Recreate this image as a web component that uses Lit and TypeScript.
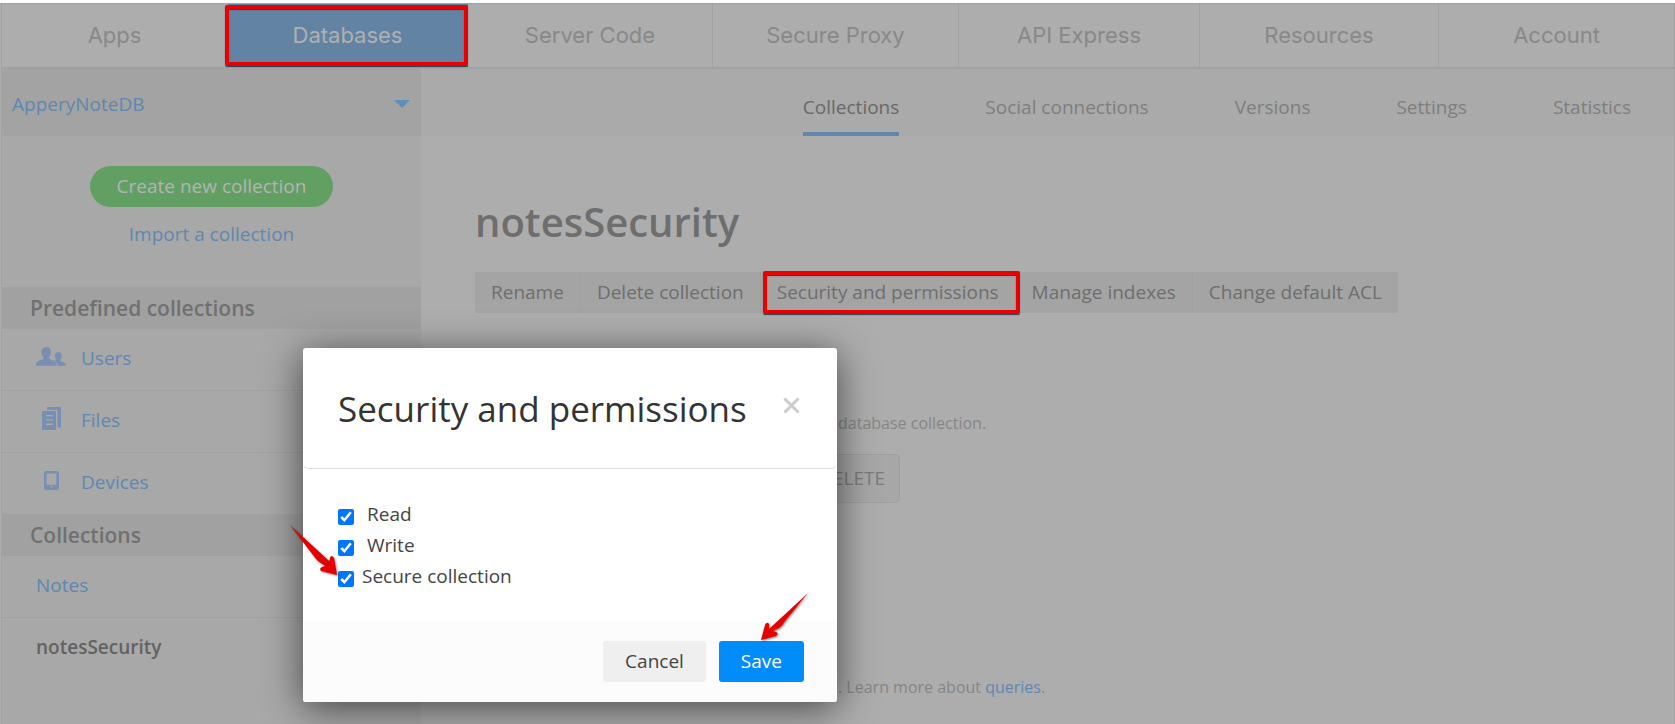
import { LitElement, html, css, svg } from "lit";
import { customElement, state } from "lit/decorators.js";
import { classMap } from "lit/directives/class-map.js";

const NAV = ["Apps", "Databases", "Server Code", "Secure Proxy", "API Express", "Resources", "Account"];
const TABS = ["Collections", "Social connections", "Versions", "Settings", "Statistics"];
const ACTIONS = ["Rename", "Delete collection", "Security and permissions", "Manage indexes", "Change default ACL"];

const usersIcon = svg`
  <svg class="icon" width="31" height="20" viewBox="0 0 31 20" aria-hidden="true">
    <path d="M11 0c3 0 4.600 2 4.400 5.200-.1 2.200-.8 4-1.900 5v1.700c1.200 1 6 2 7 3.600.5.900.6 2.200.6 3.500H0c0-1.300.1-2.600.7-3.500 1-1.600 5.600-2.600 6.900-3.600v-1.700c-1.100-1-1.900-2.800-2-5C5.500 2 8 0 11 0z"/>
    <path d="M23 5c2.400 0 3.800 1.500 3.600 4-.1 1.600-.7 2.900-1.600 3.700v1.200c1 .9 4.500 1.600 5.300 2.800.4.700.5 1.500.5 2.300h-8.600c0-2-.5-3.800-2-4.700l-1.500-.8c.7-.2 1.700-.6 1.900-.9v-.800c-.700-.700-1.200-1.800-1.200-3C19.400 6.500 20.800 5 23 5z"/>
  </svg>`;
const filesIcon = svg`
  <svg class="icon" width="19" height="23" viewBox="0 0 19 23" aria-hidden="true">
    <path d="M5 0h14v20.500h-3.500V2.700H5z"/>
    <path fill-rule="evenodd" d="M0 4h14v19H0zM4 8v1.300h7V8zM4 12.300v1.300h7v-1.300zM4 16.600v1.300h7v-1.300z"/>
  </svg>`;
const deviceIcon = svg`
  <svg class="icon" width="15" height="19" viewBox="0 0 15 19" aria-hidden="true">
    <path fill-rule="evenodd" d="M2 0h11a2 2 0 0 1 2 2v15a2 2 0 0 1-2 2H2a2 2 0 0 1-2-2V2a2 2 0 0 1 2-2zM2.600 2.500v11.300h9.800V2.500zM6.300 15.300l1.200 2 1.200-2z"/>
  </svg>`;

@customElement("permissions-dialog")
export class PermissionsDialog extends LitElement {
  static styles = css`
    :host { display: block; width: 534px; font-family: "Open Sans", sans-serif; color: #333; }
    .dialog {
      background: #fff; border-radius: 3px; overflow: hidden;
      box-shadow: 0 6px 38px rgba(0, 0, 0, 0.6);
    }
    .head {
      display: flex; justify-content: space-between; align-items: flex-start;
      padding: 35px 37px 32px 35px; height: 53px;
      border-bottom: 1px solid #ddd; border-radius: 6px;
    }
    h2 { margin: 0; font-weight: 400; font-size: 35px; line-height: 52px; white-space: nowrap; }
    .close { display: flex; margin-top: 14px; padding: 0; border: 0; background: none; }
    .close path { stroke: #ccc; stroke-width: 3; fill: none; }
    .body { display: flex; flex-direction: column; padding: 30px 35px 29px; }
    .row {
      display: flex; align-items: center; height: 31px; gap: 8px;
      font-size: 19px; line-height: 31px; color: #444;
    }
    .row.wide { gap: 13px; }
    input { width: 16px; height: 16px; margin: 4px 0 0; accent-color: #0075ff; }
    .foot {
      display: flex; justify-content: flex-end; gap: 13px;
      padding: 20px 33px; background: #fcfcfc;
    }
    .btn {
      height: 41px; padding: 0 22px; border: 0; border-radius: 3px;
      font: 400 19px/41px "Open Sans", sans-serif; color: #444; background: #efefef;
    }
    .btn.primary { background: #008df9; color: #fff; }
  `;

  render() {
    return html`
      <section class="dialog" role="dialog" aria-labelledby="title">
        <header class="head">
          <h2 id="title">Security and permissions</h2>
          <button class="close" aria-label="Close">
            <svg width="17" height="17" viewBox="0 0 17 17"><path d="M1.500 1.500l14 14M15.500 1.500l-14 14" /></svg>
          </button>
        </header>
        <div class="body">
          <label class="row wide"><input type="checkbox" checked />Read</label>
          <label class="row wide"><input type="checkbox" checked />Write</label>
          <label class="row"><input type="checkbox" checked />Secure collection</label>
        </div>
        <footer class="foot">
          <button class="btn">Cancel</button>
          <button class="btn primary">Save</button>
        </footer>
      </section>
    `;
  }
}

@customElement("app-root")
export class AppRoot extends LitElement {
  static styles = css`
    :host {
      display: flex; flex-direction: column; position: relative; overflow: hidden;
      box-sizing: border-box; min-height: 100vh; border-top: 3px solid #fff;
      background: #adadad; color: #6e6e6e; font-family: "Open Sans", sans-serif; font-size: 19px;
    }
    a { color: inherit; text-decoration: none; }
    button { font: inherit; color: inherit; border: 0; }
    .nav {
      display: grid; grid-template-columns: 226fr 240fr 245fr 246fr 241fr 239fr 235fr;
      border: 1px solid #a1a1a1; border-bottom-width: 2px; margin: 0 0 0 1px;
      font-family: Inter, sans-serif; font-size: 22px; color: #888;
    }
    .nav-item {
      position: relative; height: 63px; line-height: 63px; text-align: center;
      border-right: 1px solid #a1a1a1;
    }
    .nav-item:last-child { border-right: 0; }
    .nav-item.active { background: #6283a3; color: #b0b0b0; border-color: transparent; }
    .mark {
      position: absolute; border: 4px solid #e90000; border-radius: 2px;
      box-shadow: 0 1px 1px #2b3c4c, inset 0 1px 1px #2b3c4c; pointer-events: none;
    }
    .nav-item .mark { inset: 1px -1px 1px -3px; }
    .main { display: flex; flex: 1; }
    .side {
      flex: none; background: #a8a8a8; margin-left: 1px; border-left: 1px solid #a2a2a2;
      box-sizing: border-box; width: 420px;
    }
    .db {
      display: flex; justify-content: space-between; align-items: center; box-sizing: border-box;
      width: 100%; height: 67px; padding: 2px 11px 0 10px; background: #a3a3a3; border-radius: 3px;
      color: #5f87b0;
    }
    .caret { border: 8px solid transparent; border-top-color: #5f8fb8; border-bottom: 0; }
    .create { display: flex; flex-direction: column; align-items: center; height: 121px; padding-top: 30px; }
    .pill {
      width: 243px; height: 41px; border-radius: 21px; background: #629f63; color: #b4b4b4;
      padding: 0 0 2px;
    }
    .link { color: #5f87b0; }
    .create .link { line-height: 28px; margin-top: 13px; }
    h3 {
      margin: 0; padding-left: 28px; height: 42px; line-height: 42px;
      font-size: 21px; font-weight: 600; background: #a1a1a1; color: #707070;
    }
    .list { list-style: none; margin: 0; padding: 0; }
    .item {
      display: flex; align-items: center; height: 61px; line-height: 59px; padding-left: 34px;
      border-bottom: 1px solid #a1a1a1; box-sizing: content-box; color: #5f87b0;
    }
    .list li { height: 62px; }
    .item { height: 59px; padding-bottom: 2px; }
    .list li:last-child { height: 61px; }
    .list li:last-child .item { border-bottom: 0; }
    .item.current { color: #626262; font-weight: 600; }
    .glyph { display: flex; justify-content: center; width: 45px; padding: 0 15px 4px 0; box-sizing: border-box; }
    .icon { fill: #768fb3; }
    .content { flex: 1; min-width: 0; border-right: 1px solid #a2a2a2; }
    .tabs { display: flex; justify-content: flex-end; gap: 86px; height: 67px; padding-right: 43px; background: #aaa; color: #7e7e7e; }
    .tab { box-sizing: border-box; height: 67px; line-height: 76px; white-space: nowrap; }
    .tab.active { border-bottom: 4px solid #6086a8; color: #686868; }
    .panel { padding: 54px 54px 0; }
    h1 { margin: 0; font-size: 40px; font-weight: 600; line-height: 64px; }
    .actions { display: flex; width: max-content; margin-top: 18px; background: #a4a4a4; }
    .action {
      position: relative; height: 41px; padding: 0 16px 2px; background: none; white-space: nowrap;
      border-right: 1px solid #a0a0a0;
    }
    .action:last-child { border-right: 0; }
    .action .mark { inset: -1px -5px -1px 2px; }
    .details { padding-left: 363px; color: #868686; font-size: 16px; }
    .details p { margin: 0; line-height: 24px; white-space: nowrap; }
    .details .note { margin-top: 98px; }
    .delete {
      display: block; width: 100px; height: 49px; margin: 19px 0 0 -38px; padding: 0 14px 2px; text-align: right;
      border: 1px solid #9f9f9f; border-radius: 5px; background: #a7a7a7; color: #7b7b7b; font-size: 19px;
    }
    .details .more { margin-top: 172px; }
    .dialog-layer { position: absolute; top: 345px; left: 303px; }
    .arrow { position: absolute; fill: #e50000; overflow: visible; filter: drop-shadow(1px 1px 1px rgba(0, 0, 0, 0.5)); }
    .arrow.down-right { left: -13px; top: 177px; }
    .arrow.down-left { left: 458px; top: 245px; }
  `;

  @state() private section = "Databases";
  @state() private tab = "Collections";

  private entry(label: string, icon?: unknown, current = false) {
    return html`<li><a href="#" class=${classMap({ item: true, current })}>
      ${icon ? html`<span class="glyph">${icon}</span>` : ""}${label}</a></li>`;
  }

  render() {
    return html`
      <nav class="nav">
        ${NAV.map((n) => html`<a href="#" class=${classMap({ "nav-item": true, active: n === this.section })}>${n}${
          n === this.section ? html`<span class="mark"></span>` : ""}</a>`)}
      </nav>
      <div class="main">
        <aside class="side">
          <button class="db">ApperyNoteDB<span class="caret"></span></button>
          <div class="create">
            <button class="pill">Create new collection</button>
            <a class="link" href="#">Import a collection</a>
          </div>
          <h3>Predefined collections</h3>
          <ul class="list">
            ${this.entry("Users", usersIcon)}${this.entry("Files", filesIcon)}${this.entry("Devices", deviceIcon)}
          </ul>
          <h3>Collections</h3>
          <ul class="list">
            ${this.entry("Notes")}${this.entry("notesSecurity", undefined, true)}
          </ul>
        </aside>
        <main class="content">
          <div class="tabs">
            ${TABS.map((t) => html`<a href="#" class=${classMap({ tab: true, active: t === this.tab })}>${t}</a>`)}
          </div>
          <div class="panel">
            <h1>notesSecurity</h1>
            <div class="actions">
              ${ACTIONS.map((a, i) => html`<button class="action">${a}${i === 2 ? html`<span class="mark"></span>` : ""}</button>`)}
            </div>
            <div class="details">
              <p class="note">database collection.</p>
              <button class="delete">DELETE</button>
              <p class="more">. Learn more about <a class="link" href="#">queries</a>.</p>
            </div>
          </div>
        </main>
      </div>
      <div class="dialog-layer">
        <permissions-dialog></permissions-dialog>
        <svg class="arrow down-right" width="48" height="51" viewBox="0 0 48 51" aria-hidden="true">
          <path d="M0 0L38 35Q40 37 40 33Q41 29 44 33L47 50L31 46Q29 43 32 42L35 41L28 36Q25 33 23 30Z" />
        </svg>
        <svg class="arrow down-left" width="48" height="48" viewBox="0 0 48 48" aria-hidden="true">
          <path d="M47 0L8 36L8 31Q6 28 4 32L0 47L15 43Q18 40 15 39L12 38L18 35Q22 32 24 28Z" />
        </svg>
      </div>
    `;
  }
}
